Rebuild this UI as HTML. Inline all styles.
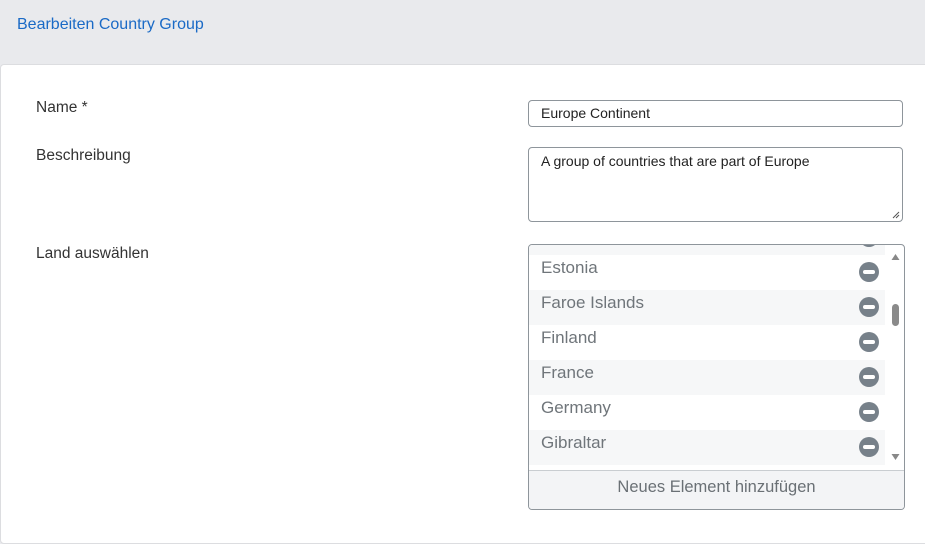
<!DOCTYPE html>
<html><head><meta charset="utf-8"><style>
*{box-sizing:border-box;margin:0;padding:0}
body{width:925px;height:535px;background:#e9eaed;font-family:"Liberation Sans",sans-serif;position:relative;overflow:hidden}
.title{position:absolute;left:17px;top:16px;font-size:16px;color:#1a6ac6}
.panel{position:absolute;left:0;top:64px;width:940px;height:480px;background:#fff;border:1px solid #dcdde0;border-radius:4px}
.lbl{position:absolute;left:36px;font-size:15.5px;color:#333}
.inp{position:absolute;left:528px;width:375px;border:1px solid #8e959b;border-radius:4px;background:#fff;font-size:14px;color:#222;padding-left:12px}
.list{position:absolute;left:528px;top:244px;width:377px;height:266px;border:1px solid #8e959b;border-radius:4px;overflow:hidden;background:#fff}
.row{position:absolute;left:0;width:356px;height:35px;font-size:17px;color:#6f757a;padding-left:12px;line-height:26px}
.row.g{background:#f6f7f8}
.ic{position:absolute;left:330px;top:7px;width:20px;height:20px;border-radius:50%;background:#77818a}
.ic:after{content:"";position:absolute;left:4px;top:8px;width:12px;height:4px;border-radius:2px;background:#fff}
.foot{position:absolute;left:0;top:225px;width:100%;height:41px;background:#f3f4f6;border-top:1px solid #c9cdd1;text-align:center;font-size:16.5px;color:#6a7075;line-height:32px}
</style></head><body>
<div class="title">Bearbeiten Country Group</div>
<div class="panel"></div>
<div class="lbl" style="top:99px">Name *</div>
<div class="lbl" style="top:147px">Beschreibung</div>
<div class="lbl" style="top:245px">Land auswählen</div>
<div class="inp" style="top:100px;height:27px;line-height:25px">Europe Continent</div>
<div class="inp" style="top:147px;height:75px;padding-top:5px">A group of countries that are part of Europe
<svg style="position:absolute;right:2px;bottom:2px" width="9" height="9"><path d="M8 2L2 8M8 5L5 8" stroke="#555" stroke-width="1"/></svg></div>
<div class="list">
<div class="row g" style="top:-25px;height:35px"><div class="ic"></div></div>
<div class="row" style="top:10px">Estonia<div class="ic"></div></div>
<div class="row g" style="top:45px">Faroe Islands<div class="ic"></div></div>
<div class="row" style="top:80px">Finland<div class="ic"></div></div>
<div class="row g" style="top:115px">France<div class="ic"></div></div>
<div class="row" style="top:150px">Germany<div class="ic"></div></div>
<div class="row g" style="top:185px">Gibraltar<div class="ic"></div></div>
<svg style="position:absolute;left:360px;top:6px" width="14" height="210">
<path d="M2.5 9L6.5 3L10.5 9Z" fill="#888"/>
<rect x="3" y="53" width="7" height="22" rx="3.5" fill="#8a8a8a"/>
<path d="M2.5 205L6.5 211L10.5 205Z" fill="#888" transform="translate(0,-2)"/>
</svg>
<div class="foot">Neues Element hinzufügen</div>
</div>
</body></html>
